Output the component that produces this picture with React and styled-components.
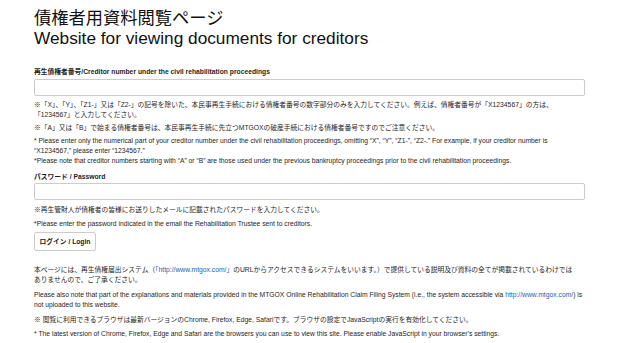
import React from "react";
import styled, { createGlobalStyle } from "styled-components";

const GlobalStyle = createGlobalStyle`
    html, body {
        margin : 0;
        padding : 0;
        background : #ffffff;
    }
    body {
        font-family : "Liberation Sans", Arial, "Noto Sans CJK JP", sans-serif;
        color : #1e1e1e;
    }
`

const Page = styled.div`
    width : 551px;
    padding : 9px 34px 0;
`
const Title = styled.h1`
    margin : 0;
    font-size : 17.25px;
    line-height : 19.5px;
    font-weight : normal;
    color : #111111;
`
const TitleLine = styled.span`
    display : block;
`
const Form = styled.form`
    margin-top : 18.5px;
`
const Label = styled.div`
    font-size : 6.75px;
    line-height : 10px;
    font-weight : bold;
    margin-top : ${(p) => p.$gap || 0}px;
`
const Input = styled.input`
    display : block;
    box-sizing : border-box;
    width : 100%;
    height : 17px;
    margin : ${(p) => p.$gap || 0}px 0 0;
    border : 1px solid #cccccc;
    border-radius : 2px;
    background : #ffffff;
    padding : 0 4px;
`
const Note = styled.p`
    margin : ${(p) => p.$gap || 0}px 0 0;
    max-width : ${(p) => p.$width || 551}px;
    font-size : 6.75px;
    line-height : 10px;
`
const Button = styled.button`
    display : block;
    box-sizing : border-box;
    margin-top : 3px;
    height : 19px;
    width : 62px;
    padding : 0;
    border : 1px solid #cccccc;
    border-radius : 2px;
    background : #ffffff;
    font-family : inherit;
    font-size : 6.75px;
    font-weight : 600;
    color : #222222;
`
const Link = styled.a`
    color : #1a5fb4;
    text-decoration : none;
`

const App = () => {
    return (
        <Page>
            <GlobalStyle />
            <Title>
                <TitleLine>債権者用資料閲覧ページ</TitleLine>
                <TitleLine>Website for viewing documents for creditors</TitleLine>
            </Title>
            <Form onSubmit={(e) => e.preventDefault()}>
                <Label>再生債権者番号/Creditor number under the civil rehabilitation proceedings</Label>
                <Input type="text" $gap={2} />
                <Note $gap={4}>
                    ※「X」、「Y」、「Z1-」又は「Z2-」の記号を除いた、本民事再生手続における債権者番号の数字部分のみを入力してください。例えば、債権者番号が「X1234567」の方は、「1234567」と入力してください。
                </Note>
                <Note $gap={3}>
                    ※「A」又は「B」で始まる債権者番号は、本民事再生手続に先立つMTGOXの破産手続における債権者番号ですのでご注意ください。
                </Note>
                <Note $gap={3}>
                    * Please enter only the numerical part of your creditor number under the civil rehabilitation proceedings, omitting “X”, “Y”, “Z1-”, “Z2-.” For example, if your creditor number is “X1234567,” please enter “1234567.”
                    <br />
                    *Please note that creditor numbers starting with “A” or “B” are those used under the previous bankruptcy proceedings prior to the civil rehabilitation proceedings.
                </Note>

                <Label $gap={6}>パスワード / Password</Label>
                <Input type="password" $gap={1} />
                <Note $gap={5}>※再生管財人が債権者の皆様にお送りしたメールに記載されたパスワードを入力してください。</Note>
                <Note $gap={4}>*Please enter the password indicated in the email the Rehabilitation Trustee sent to creditors.</Note>
                <Button type="submit">ログイン / Login</Button>
            </Form>

            <Note $gap={14} $width={542}>
                本ページには、再生債権届出システム（<Link href="#">「http://www.mtgox.com/」</Link>のURLからアクセスできるシステムをいいます。）で提供している説明及び資料の全てが掲載されているわけではありませんので、ご了承ください。
            </Note>
            <Note $gap={5}>
                Please also note that part of the explanations and materials provided in the MTGOX Online Rehabilitation Claim Filing System (i.e., the system accessible via <Link href="#">http://www.mtgox.com/</Link>) is not uploaded to this website.
            </Note>
            <Note $gap={5}>※ 閲覧に利用できるブラウザは最新バージョンのChrome, Firefox, Edge, Safariです。ブラウザの設定でJavaScriptの実行を有効化してください。</Note>
            <Note $gap={4}>* The latest version of Chrome, Firefox, Edge and Safari are the browsers you can use to view this site. Please enable JavaScript in your browser's settings.</Note>
        </Page>
    );
}

export default App;
